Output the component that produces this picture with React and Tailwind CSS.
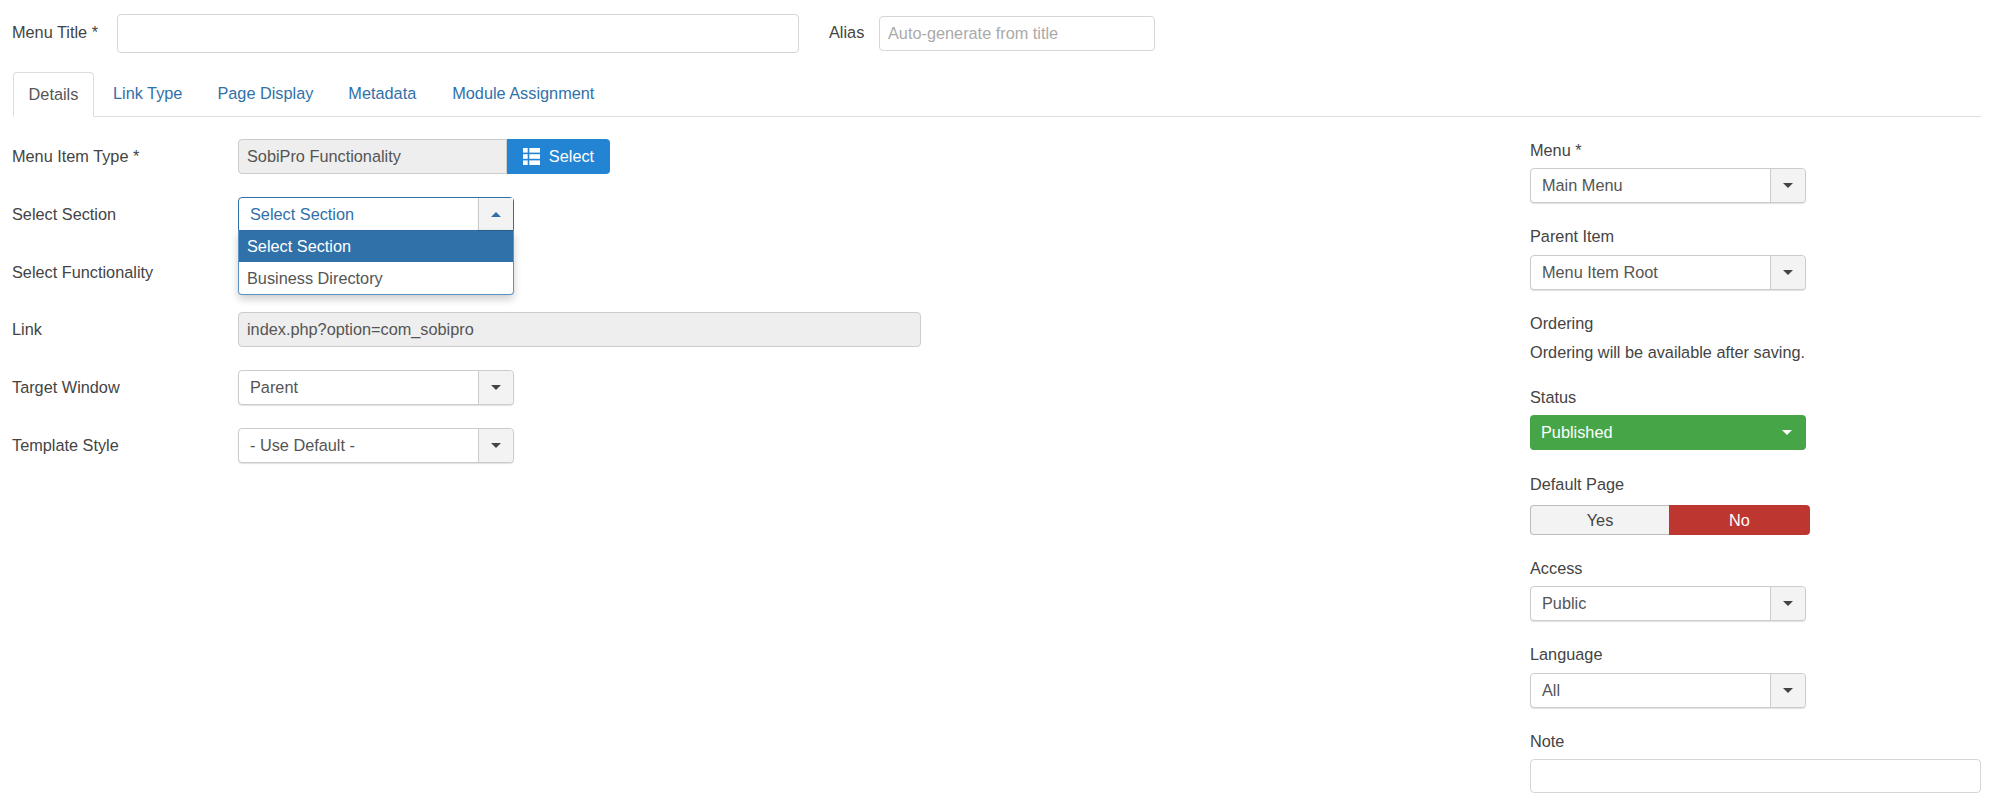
import React from 'react';

const Caret = ({ up = false, color = '#444' }) => (
    <svg width="10" height="5" viewBox="0 0 10 5" className={up ? 'rotate-180' : ''}>
        <path d="M0 0 H10 L5 5 Z" fill={color} />
    </svg>
);

const ListIcon = () => (
    <svg width="17" height="17" viewBox="0 0 17 17" fill="#fff">
        <rect x="0" y="0" width="4.7" height="4.6" />
        <rect x="6.3" y="0" width="10.7" height="4.6" />
        <rect x="0" y="6.2" width="4.7" height="4.6" />
        <rect x="6.3" y="6.2" width="10.7" height="4.6" />
        <rect x="0" y="12.4" width="4.7" height="4.6" />
        <rect x="6.3" y="12.4" width="10.7" height="4.6" />
    </svg>
);

const Select = ({ value }) => (
    <div className="flex h-[35px] w-[276px] items-center rounded-[4px] border border-[#ccc] bg-white shadow-[0_1px_1px_rgba(0,0,0,0.12)]">
        <span className="flex-1 pl-[11px] text-[#555]">{value}</span>
        <span className="flex h-full w-[35px] items-center justify-center rounded-r-[4px] border-l border-[#ccc] bg-[#f3f3f3]">
            <Caret />
        </span>
    </div>
);

const Row = ({ label, gap = 'mb-[23px]', children }) => (
    <div className={`flex h-[35px] items-center ${gap}`}>
        <label className="w-[226px] text-[#444]">{label}</label>
        {children}
    </div>
);

const Field = ({ label, gap = 'mb-[7px]', after = 'mb-[22px]', children }) => (
    <div className={after}>
        <div className={`h-[22px] leading-[22px] text-[#444] ${gap}`}>{label}</div>
        {children}
    </div>
);

const App = () => {
    return (
        <div className="min-h-screen overflow-hidden bg-white pl-[12px] pr-[18px] pt-[14px] text-[16.3px] text-[#555] [font-family:'Liberation_Sans',Arial,sans-serif]">
            {/* Title row */}
            <div className="flex items-start">
                <label className="w-[105px] leading-[37px] text-[#444]">Menu Title *</label>
                <input className="h-[39px] w-[682px] rounded-[4px] border border-[#d6d6d6] bg-white" />
                <label className="ml-[30px] w-[50px] leading-[37px] text-[#444]">Alias</label>
                <input
                    placeholder="Auto-generate from title"
                    className="mt-[2px] h-[35px] w-[276px] rounded-[4px] border border-[#d6d6d6] bg-white px-[8px] placeholder:text-[#aaa]"
                />
            </div>

            {/* Tabs */}
            <div className="mt-[19px] ml-[1px] flex h-[45px] border-b border-[#ddd]">
                <div className="z-10 -mb-px flex h-[45px] w-[81px] items-center justify-center rounded-t-[4px] border border-b-white border-[#ddd] bg-white text-[#555]">
                    Details
                </div>
                <a className="ml-[19px] leading-[43px] text-[#3071a9]">Link Type</a>
                <a className="ml-[35px] leading-[43px] text-[#3071a9]">Page Display</a>
                <a className="ml-[35px] leading-[43px] text-[#3071a9]">Metadata</a>
                <a className="ml-[36px] leading-[43px] text-[#3071a9]">Module Assignment</a>
            </div>

            <div className="mt-[22px] flex">
                {/* Main fields */}
                <div className="w-[1518px]">
                    <Row label="Menu Item Type *">
                        <div className="flex h-[35px]">
                            <div className="flex w-[269px] items-center rounded-l-[4px] border border-[#ccc] bg-[#eee] pl-[8px] text-[#555]">
                                SobiPro Functionality
                            </div>
                            <button className="flex w-[103px] items-center justify-center gap-[9px] rounded-r-[4px] bg-[#2384d3] text-white">
                                <ListIcon />
                                Select
                            </button>
                        </div>
                    </Row>
                    <Row label="Select Section">
                        <div className="relative z-20 h-[35px] w-[276px]">
                            <div className="flex h-[34px] items-center rounded-t-[4px] border border-[#3071a9] bg-white">
                                <span className="flex-1 pl-[11px] text-[#3071a9]">Select Section</span>
                                <span className="flex h-full w-[35px] items-center justify-center border-l border-[#ccc] bg-[#f3f3f3] shadow-[0_1px_1px_rgba(0,0,0,0.15)]">
                                    <Caret up color="#3071a9" />
                                </span>
                            </div>
                            {/* Open dropdown list */}
                            <div className="absolute left-0 top-[34px] w-[276px] overflow-hidden rounded-b-[4px] border border-t-0 border-[#5b93c5] bg-white shadow-[0_4px_8px_rgba(0,0,0,0.2)]">
                                <div className="flex h-[31px] items-center bg-[#3071a9] pl-[8px] text-white">Select Section</div>
                                <div className="flex h-[32px] items-center pl-[8px] text-[#555]">Business Directory</div>
                            </div>
                        </div>
                    </Row>
                    <Row label="Select Functionality" gap="mb-[22px]">
                        <div className="h-[35px] w-[276px]" />
                    </Row>
                    <Row label="Link">
                        <div className="flex h-[35px] w-[683px] items-center rounded-[4px] border border-[#ccc] bg-[#eee] pl-[8px] text-[#555]">
                            index.php?option=com_sobipro
                        </div>
                    </Row>
                    <Row label="Target Window">
                        <Select value="Parent" />
                    </Row>
                    <Row label="Template Style">
                        <Select value="- Use Default -" />
                    </Row>
                </div>

                {/* Side options */}
                <div className="w-[451px]">
                    <Field label="Menu *">
                        <Select value="Main Menu" />
                    </Field>
                    <Field label="Parent Item" gap="mb-[8px]">
                        <Select value="Menu Item Root" />
                    </Field>
                    <Field label="Ordering">
                        <div className="leading-[23px] text-[#444]">Ordering will be available after saving.</div>
                    </Field>
                    <Field label="Status" after="mb-[23px]">
                        <div className="flex h-[35px] w-[276px] items-center justify-between rounded-[4px] bg-[#46a546] pl-[11px] pr-[14px] text-white">
                            Published
                            <Caret color="#fff" />
                        </div>
                    </Field>
                    <Field label="Default Page" gap="mb-[10px]">
                        <div className="flex h-[30px] w-[280px]">
                            <div className="flex w-[139px] items-center justify-center rounded-l-[4px] border border-r-0 border-[#bbb] bg-[#f3f3f3] text-[#444]">
                                Yes
                            </div>
                            <div className="flex flex-1 items-center justify-center rounded-r-[4px] bg-[#bd362f] text-white">
                                No
                            </div>
                        </div>
                    </Field>
                    <Field label="Access">
                        <Select value="Public" />
                    </Field>
                    <Field label="Language" gap="mb-[8px]">
                        <Select value="All" />
                    </Field>
                    <Field label="Note">
                        <input className="h-[34px] w-[451px] rounded-[4px] border border-[#d6d6d6] bg-white" />
                    </Field>
                </div>
            </div>
        </div>
    );
};

export default App;
